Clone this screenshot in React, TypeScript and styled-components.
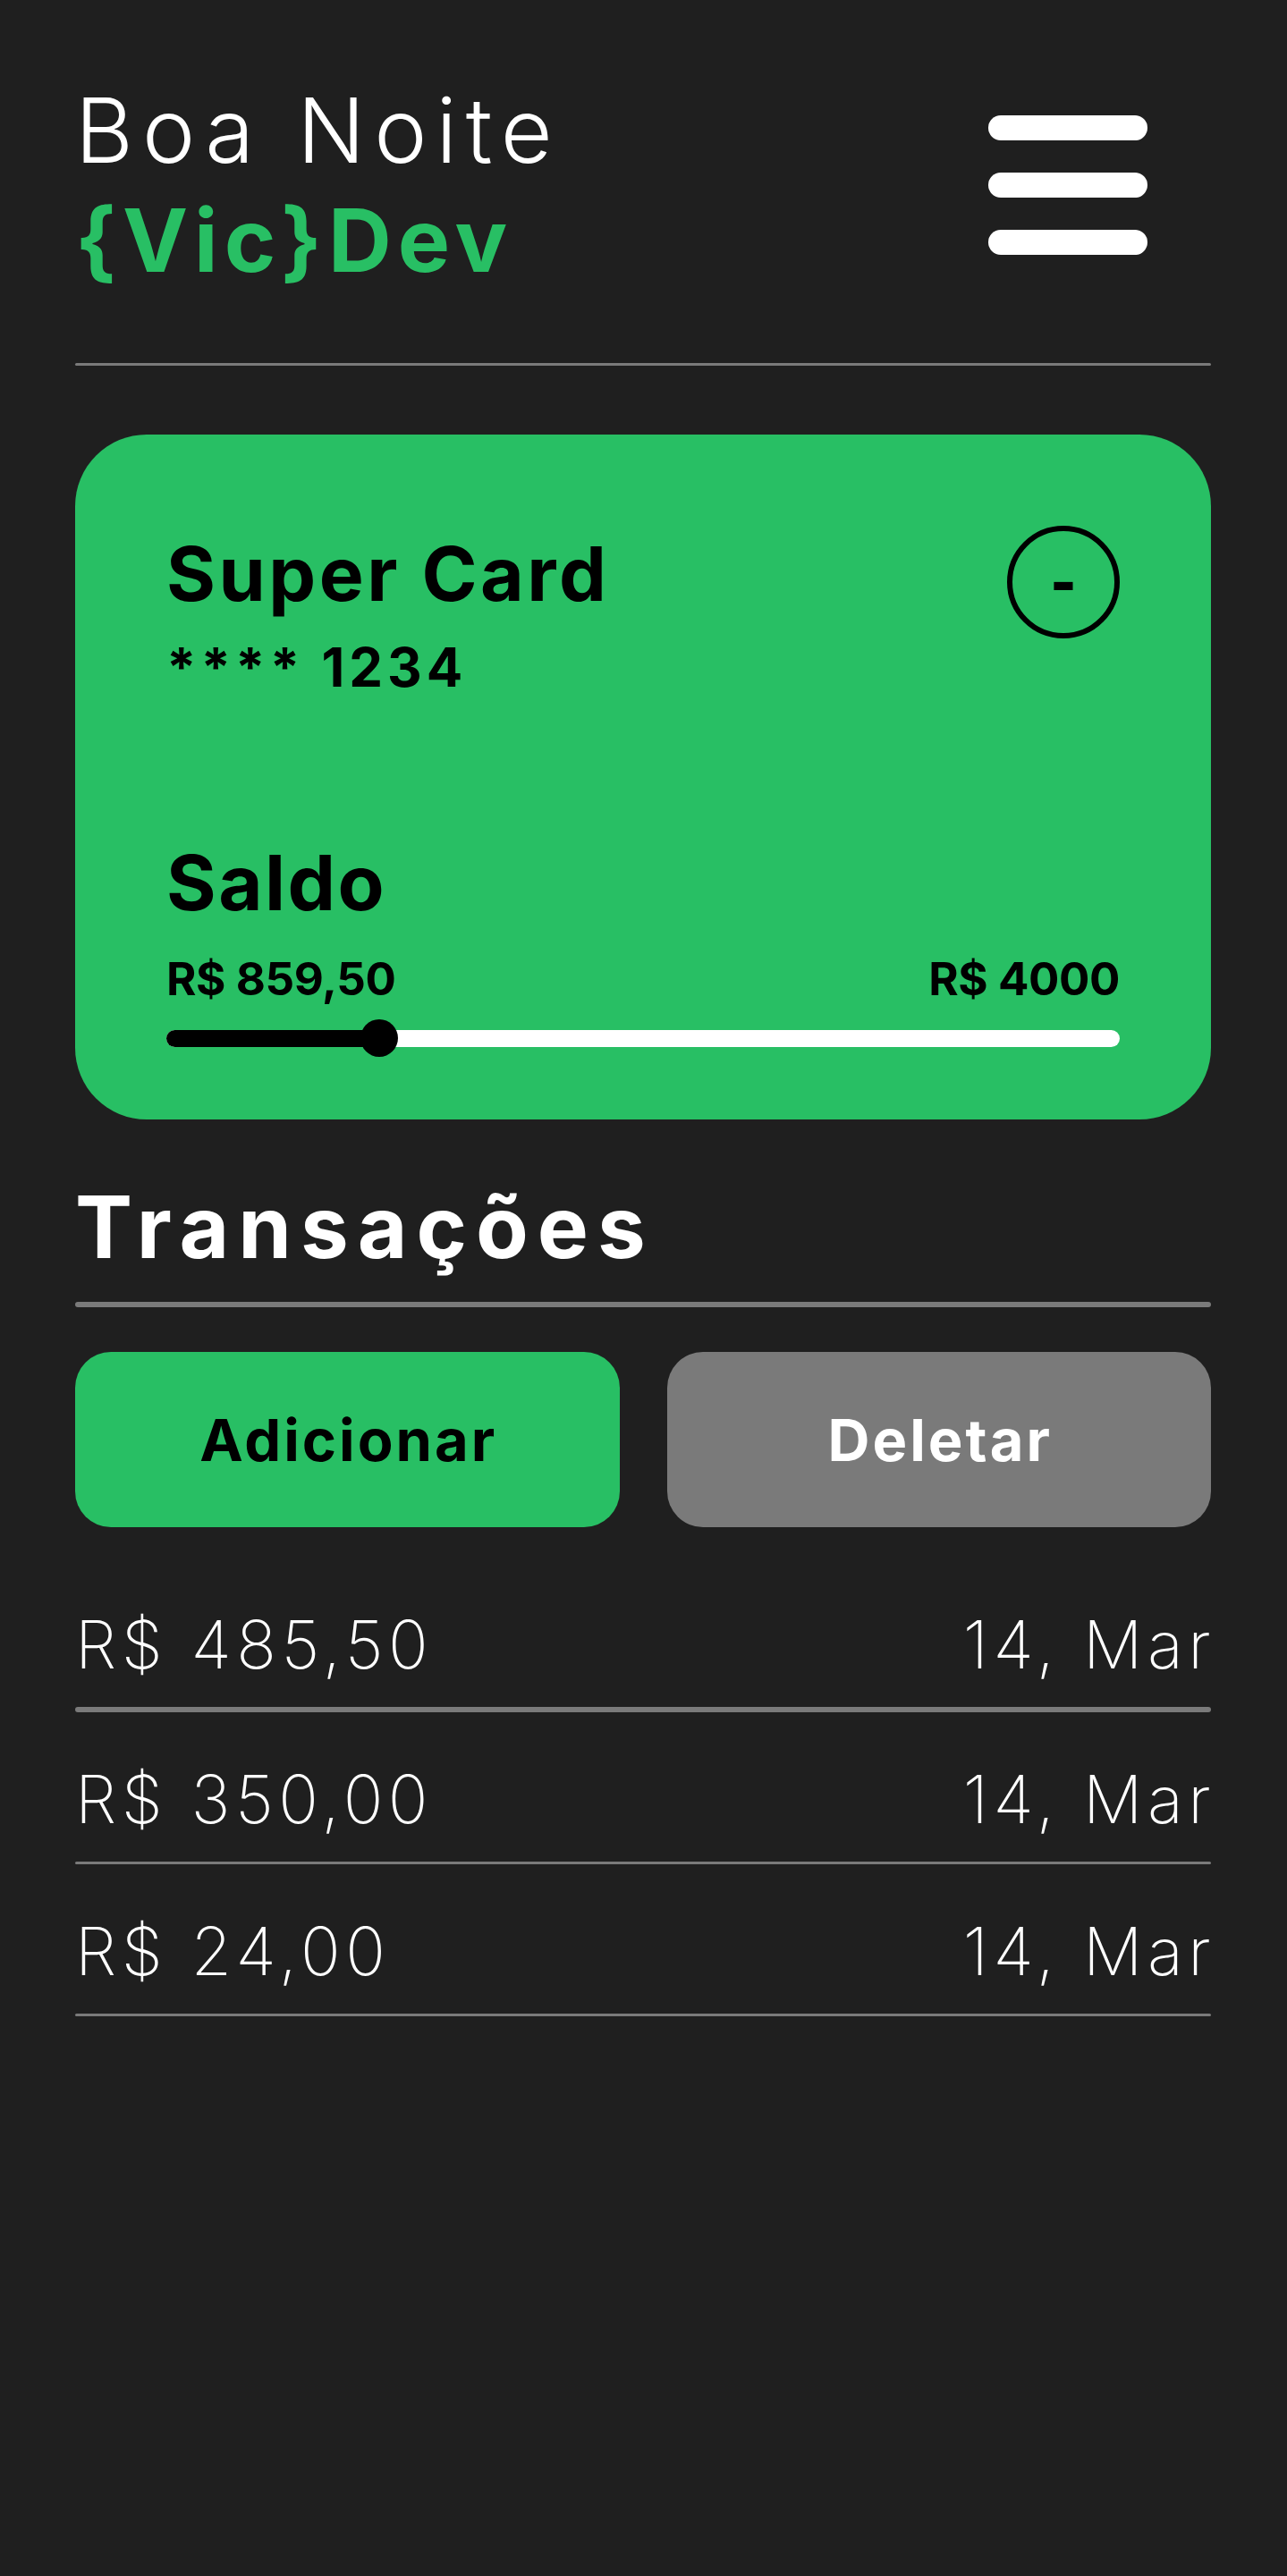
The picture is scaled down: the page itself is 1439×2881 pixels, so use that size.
import React from "react";
import styled, { createGlobalStyle } from "styled-components";

const GREEN = "#28bf64";
const GRAY = "#7a7a7a";
const BG = "#1f1f1f";

const Global = createGlobalStyle`
  html, body { margin: 0; padding: 0; background: ${BG}; }
  body { font-family: Inter, "Noto Sans", sans-serif; min-height: 2881px; }
  * { box-sizing: border-box; }
`;

const Page = styled.main`
  width: 1439px;
  min-height: 2881px;
  background: ${BG};
  padding: 96px 85px 0 84px;
  display: flex;
  flex-direction: column;
`;

const Header = styled.header`
  display: flex;
  justify-content: space-between;
  align-items: flex-start;
`;

const Greeting = styled.div`
  display: flex;
  flex-direction: column;
  gap: 24px;
`;

const Hello = styled.h1`
  margin: 0;
  font-size: 100px;
  line-height: 1;
  font-weight: 300;
  color: #fff;
  letter-spacing: 10px;
`;

const Brand = styled.h2`
  margin: 0;
  font-size: 98px;
  line-height: 1;
  font-weight: 700;
  color: ${GREEN};
  letter-spacing: 7px;
`;

const MenuButton = styled.button`
  margin: 33px 71px 0 0;
  padding: 0;
  background: none;
  border: none;
  display: flex;
  flex-direction: column;
  gap: 36px;
  cursor: pointer;
`;

const MenuBar = styled.span`
  display: block;
  width: 178px;
  height: 28px;
  border-radius: 14px;
  background: #fff;
`;

const Divider = styled.hr<{ $thick?: boolean; $top?: number }>`
  margin: ${(p) => p.$top ?? 0}px 0 0 0;
  border: none;
  height: ${(p) => (p.$thick ? 6 : 3)}px;
  border-radius: 3px;
  background: ${GRAY};
  width: 100%;
`;

const Card = styled.section`
  margin-top: 77px;
  height: 766px;
  border-radius: 80px;
  background: ${GREEN};
  padding: 102px 102px 70px 102px;
  display: flex;
  flex-direction: column;
  justify-content: space-between;
  color: #000;
`;

const CardTop = styled.div`
  display: flex;
  justify-content: space-between;
  align-items: flex-start;
`;

const CardInfo = styled.div`
  padding-top: 12px;
  display: flex;
  flex-direction: column;
  gap: 32px;
`;

const CardName = styled.div`
  font-size: 84px;
  line-height: 1;
  font-weight: 700;
  letter-spacing: 3.5px;
`;

const CardNumber = styled.div`
  font-size: 60px;
  line-height: 1;
  font-weight: 700;
  letter-spacing: 5px;
`;

const CircleButton = styled.button`
  width: 126px;
  height: 126px;
  border-radius: 50%;
  border: 6px solid #000;
  background: transparent;
  color: #000;
  font-family: Inter, sans-serif;
  font-size: 62px;
  line-height: 1;
  font-weight: 900;
  display: flex;
  align-items: center;
  justify-content: center;
  padding: 0;
  cursor: pointer;
`;

const CardBottom = styled.div`
  display: flex;
  flex-direction: column;
`;

const SaldoLabel = styled.div`
  font-size: 85px;
  line-height: 1;
  font-weight: 700;
  letter-spacing: 2.5px;
`;

const Amounts = styled.div`
  margin-top: 39px;
  display: flex;
  justify-content: space-between;
  font-size: 51px;
  line-height: 1;
  font-weight: 700;
  letter-spacing: -0.4px;
`;

const Slider = styled.div`
  margin-top: 20px;
  position: relative;
  height: 42px;
  display: flex;
  align-items: center;
`;

const Track = styled.div`
  width: 100%;
  height: 19px;
  border-radius: 10px;
  background: #fff;
  overflow: hidden;
`;

const Fill = styled.div`
  height: 100%;
  background: #000;
`;

const Thumb = styled.div`
  position: absolute;
  top: 0;
  width: 42px;
  height: 42px;
  margin-left: -21px;
  border-radius: 50%;
  background: #000;
`;

const SectionTitle = styled.h3`
  margin: 72px 0 0 0;
  font-size: 96px;
  line-height: 1;
  font-weight: 700;
  color: #fff;
  letter-spacing: 10px;
`;

const Actions = styled.div`
  margin-top: 50px;
  display: grid;
  grid-template-columns: 1fr 1fr;
  gap: 53px;
`;

const ActionButton = styled.button<{ $variant: "add" | "delete" }>`
  height: 196px;
  border: none;
  border-radius: 40px;
  background: ${(p) => (p.$variant === "add" ? GREEN : GRAY)};
  color: ${(p) => (p.$variant === "add" ? "#000" : "#fff")};
  font-family: Inter, sans-serif;
  font-size: 65px;
  font-weight: 700;
  letter-spacing: 3px;
  padding: 0 0 0 3px;
  cursor: pointer;
`;

const List = styled.ul`
  list-style: none;
  margin: 34px 0 0 0;
  padding: 0;
`;

const Row = styled.li`
  padding-top: 60px;
`;

const RowLine = styled.div`
  display: flex;
  justify-content: space-between;
  font-size: 74px;
  line-height: 1;
  font-weight: 200;
  color: #fff;
  letter-spacing: 5.5px;
  margin-bottom: 33px;
`;

const RowDate = styled.span`
  margin-right: -5px;
`;

const transactions = [
  { value: "R$ 485,50", date: "14, Mar" },
  { value: "R$ 350,00", date: "14, Mar" },
  { value: "R$ 24,00", date: "14, Mar" },
];

export default function App() {
  const balance = 859.5;
  const limit = 4000;
  const pct = (balance / limit) * 100;
  return (
    <>
      <Global />
      <Page>
        <Header>
          <Greeting>
            <Hello>Boa Noite</Hello>
            <Brand>{"{Vic}Dev"}</Brand>
          </Greeting>
          <MenuButton aria-label="menu">
            <MenuBar />
            <MenuBar />
            <MenuBar />
          </MenuButton>
        </Header>
        <Divider $top={88} />
        <Card>
          <CardTop>
            <CardInfo>
              <CardName>Super Card</CardName>
              <CardNumber>**** 1234</CardNumber>
            </CardInfo>
            <CircleButton>-</CircleButton>
          </CardTop>
          <CardBottom>
            <SaldoLabel>Saldo</SaldoLabel>
            <Amounts>
              <span>R$ 859,50</span>
              <span>R$ 4000</span>
            </Amounts>
            <Slider>
              <Track>
                <Fill style={{ width: `calc(${pct}% + 9px)` }} />
              </Track>
              <Thumb style={{ left: `calc(${pct}% + 9px)` }} />
            </Slider>
          </CardBottom>
        </Card>
        <SectionTitle>Transações</SectionTitle>
        <Divider $thick $top={36} />
        <Actions>
          <ActionButton $variant="add">Adicionar</ActionButton>
          <ActionButton $variant="delete">Deletar</ActionButton>
        </Actions>
        <List>
          {transactions.map((t, i) => (
            <Row key={i}>
              <RowLine>
                <span>{t.value}</span>
                <RowDate>{t.date}</RowDate>
              </RowLine>
              <Divider $thick={i === 0} />
            </Row>
          ))}
        </List>
      </Page>
    </>
  );
}
